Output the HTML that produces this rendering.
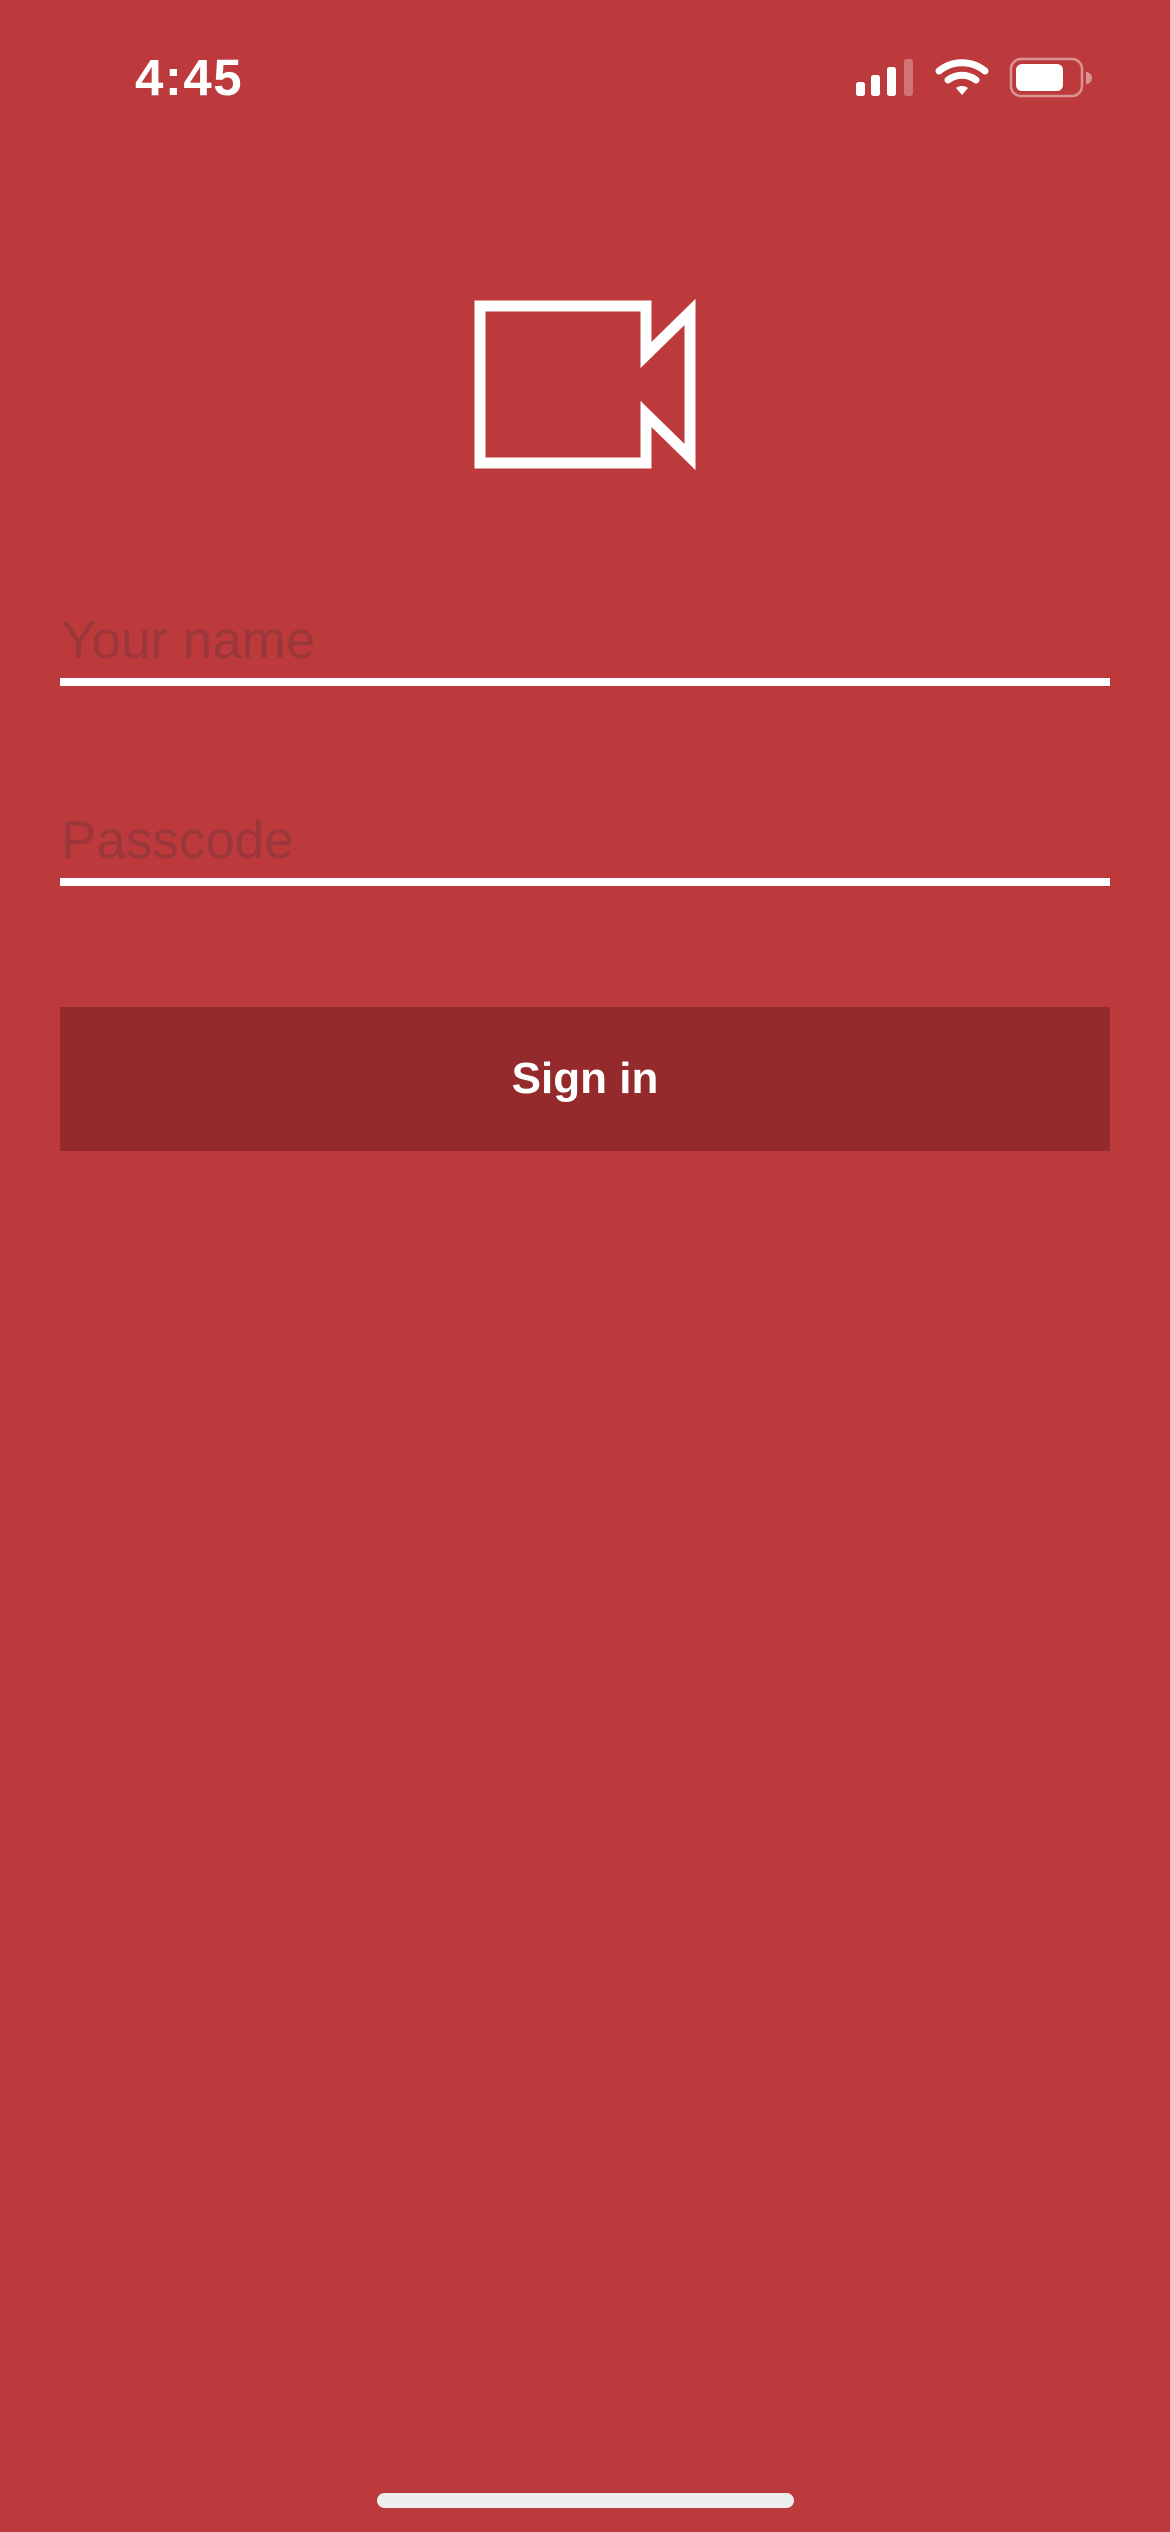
<!DOCTYPE html>
<html><head><meta charset="utf-8"><style>
html,body{margin:0;padding:0}
body{width:1170px;height:2532px;background:#bc3a3b;position:relative;overflow:hidden;font-family:"Liberation Sans",sans-serif}
.a{position:absolute}
.ph{color:#9b373b;font-size:53px;left:61px;line-height:1}
.ul{left:60px;width:1050px;height:8px;background:#fff}
</style></head><body>
<div class="a" style="left:135px;top:52px;font-size:51px;line-height:1;font-weight:bold;color:#fff;letter-spacing:1.5px">4:45</div>
<svg class="a" style="left:840px;top:50px" width="260" height="55" viewBox="840 50 260 55">
<rect x="856" y="82" width="9" height="14" rx="2.5" fill="#fff"/>
<rect x="871" y="75" width="9" height="21" rx="2.5" fill="#fff"/>
<rect x="887" y="67" width="9" height="29" rx="2.5" fill="#fff"/>
<rect x="904" y="59" width="9" height="37" rx="2.5" fill="#fff" opacity="0.3"/>
<path d="M939 71 A36 36 0 0 1 985 71" stroke="#fff" stroke-width="7" fill="none" stroke-linecap="round"/>
<path d="M948 80 A23 23 0 0 1 976 80" stroke="#fff" stroke-width="7" fill="none" stroke-linecap="round"/>
<path d="M956 88 L962 95 L968 88 A10 10 0 0 0 956 88Z" fill="#fff"/>
<rect x="1011" y="59" width="71" height="37" rx="10" fill="none" stroke="#fff" stroke-opacity="0.45" stroke-width="2.5"/>
<rect x="1016" y="64" width="47" height="27" rx="6" fill="#fff"/>
<path d="M1086 72 A6 6 0 0 1 1086 84Z" fill="#fff" opacity="0.45"/>
</svg>
<svg class="a" style="left:470px;top:290px" width="232" height="190" viewBox="470 290 232 190">
<path d="M480 306 H646 V355 L690 312 V457 L646 414 V463 H480 Z" fill="none" stroke="#fff" stroke-width="11" stroke-linejoin="miter" stroke-miterlimit="10"/>
</svg>
<div class="a ph" style="top:614px">Your name</div>
<div class="a ul" style="top:678px"></div>
<div class="a ph" style="top:814px">Passcode</div>
<div class="a ul" style="top:878px"></div>
<div class="a" style="left:60px;top:1007px;width:1050px;height:144px;background:#952a2c;color:#fff;font-weight:bold;font-size:44px;text-align:center;line-height:144px">Sign in</div>
<div class="a" style="left:377px;top:2493px;width:417px;height:15px;border-radius:8px;background:#eee"></div>
</body></html>
